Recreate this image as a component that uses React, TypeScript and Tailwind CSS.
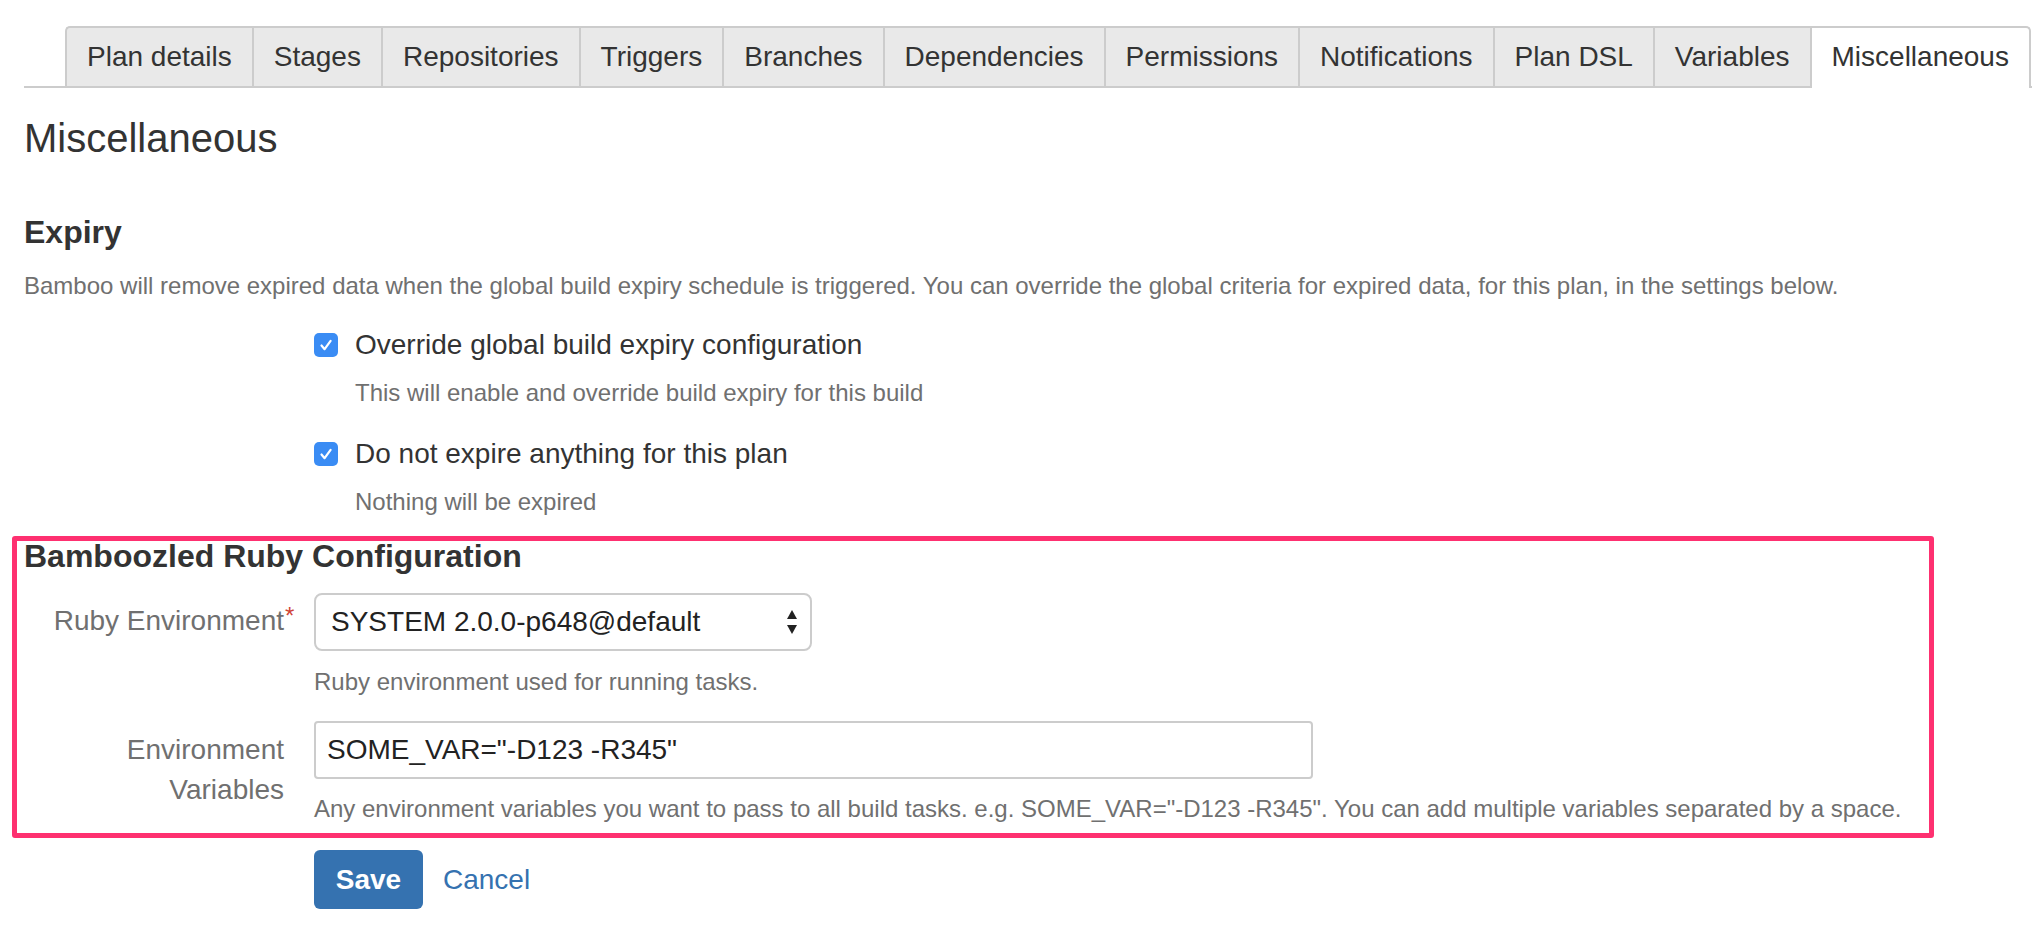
import React from 'react';

const tabs = [
  'Plan details',
  'Stages',
  'Repositories',
  'Triggers',
  'Branches',
  'Dependencies',
  'Permissions',
  'Notifications',
  'Plan DSL',
  'Variables',
  'Miscellaneous',
];

function TabBar() {
  const active = 'Miscellaneous';
  return (
    <div className="mt-[26px] ml-[24px] flex items-stretch">
      <div className="w-[41px] border-b-2 border-[#cccccc]" />
      {tabs.map((tab, i) => {
        const isActive = tab === active;
        const first = i === 0;
        const base = 'flex h-[62px] items-center border-t-2 border-l-2 border-[#cccccc] px-[20px] text-[28px] text-[#333333]';
        return isActive ? (
          <div key={tab} className={`${base} rounded-tr-[5px] border-r-2 bg-white pb-[2px]`}>
            {tab}
          </div>
        ) : (
          <div
            key={tab}
            className={`${base} border-b-2 bg-[#e9e9e9] ${first ? 'rounded-tl-[5px]' : ''}`}
          >
            {tab}
          </div>
        );
      })}
      <div className="flex-1 border-b-2 border-[#cccccc]" />
    </div>
  );
}

function Checkbox() {
  return (
    <span className="flex h-[24px] w-[24px] shrink-0 items-center justify-center rounded-[5px] bg-[#3a8cf4]">
      <svg width="20" height="20" viewBox="0 0 20 20" fill="none">
        <path d="M5.5 10.5 L8.6 14.2 L14.6 5.8" stroke="white" strokeWidth="2.2" strokeLinecap="round" strokeLinejoin="round" />
      </svg>
    </span>
  );
}

function CheckRow({ label, desc, first }: { label: string; desc: string; first?: boolean }) {
  return (
    <div className={first ? 'mt-[23px]' : 'mt-[25px]'}>
      <label className="flex h-[40px] items-center gap-[17px] text-[28px] leading-[40px] text-[#333333]">
        <Checkbox />
        <span>{label}</span>
      </label>
      <div className="mt-[12px] pl-[41px] text-[24px] leading-[32px] text-[#707070]">{desc}</div>
    </div>
  );
}

function SelectArrows() {
  return (
    <svg width="12" height="26" viewBox="0 0 12 26" className="shrink-0">
      <path d="M6 1 L11 10 L1 10 Z" fill="#222222" />
      <path d="M1 16 L11 16 L6 25 Z" fill="#222222" />
    </svg>
  );
}

export default function App() {
  return (
    <div className="min-h-screen bg-white pb-10 font-['Liberation_Sans',Arial,sans-serif] text-[#333333]">
      <TabBar />
      <div className="pl-[24px]">
        <h2 className="mt-[26px] text-[40px] leading-[48px] font-normal">Miscellaneous</h2>

        <h3 className="mt-[50px] text-[32px] leading-[40px] font-bold">Expiry</h3>
        <p className="mt-[18px] text-[24px] leading-[32px] text-[#707070]">
          Bamboo will remove expired data when the global build expiry schedule is triggered. You can override the global criteria for expired data, for this plan, in the settings below.
        </p>

        <div className="pl-[290px]">
          <CheckRow first label="Override global build expiry configuration" desc="This will enable and override build expiry for this build" />
          <CheckRow label="Do not expire anything for this plan" desc="Nothing will be expired" />
        </div>

        <div className="mt-[18px] -ml-[12px] w-[1922px] rounded-[3px] border-[5px] border-[#fe3070] pl-[7px] pb-[8px]">
          <h3 className="text-[32px] leading-[30px] font-bold">Bamboozled Ruby Configuration</h3>

          <div className="mt-[22px] flex gap-[30px]">
            <div className="w-[260px] shrink-0 pt-[8px] text-right text-[28px] leading-[40px] text-[#707070]">
              <span className="relative">
                Ruby Environment
                <span className="absolute left-full top-[-1px] ml-[1px] text-[24px] leading-none text-[#d04437]">*</span>
              </span>
            </div>
            <div>
              <div className="flex h-[58px] w-[498px] items-center justify-between rounded-[8px] border-2 border-[#cccccc] pl-[15px] pr-[12px] text-[28px] text-[#222222]">
                <span>SYSTEM 2.0.0-p648@default</span>
                <SelectArrows />
              </div>
              <div className="mt-[15px] text-[24px] leading-[32px] text-[#707070]">Ruby environment used for running tasks.</div>
            </div>
          </div>

          <div className="mt-[23px] flex gap-[30px]">
            <div className="w-[260px] shrink-0 pt-[9px] text-right text-[28px] leading-[40px] text-[#707070]">
              Environment
              <br />
              Variables
            </div>
            <div>
              <div className="flex h-[58px] w-[999px] items-center rounded-[4px] border-2 border-[#cccccc] pl-[11px] text-[28px] text-[#222222]">
                SOME_VAR=&quot;-D123 -R345&quot;
              </div>
              <div className="mt-[14px] text-[24px] leading-[32px] text-[#707070]">
                Any environment variables you want to pass to all build tasks. e.g. SOME_VAR=&quot;-D123 -R345&quot;. You can add multiple variables separated by a space.
              </div>
            </div>
          </div>
        </div>

        <div className="mt-[12px] flex items-center pl-[290px]">
          <button className="h-[59px] w-[109px] rounded-[6px] bg-[#3572b0] text-[28px] font-bold text-white">Save</button>
          <a className="ml-[20px] text-[28px] text-[#3572b0]" href="#">Cancel</a>
        </div>
      </div>
    </div>
  );
}
